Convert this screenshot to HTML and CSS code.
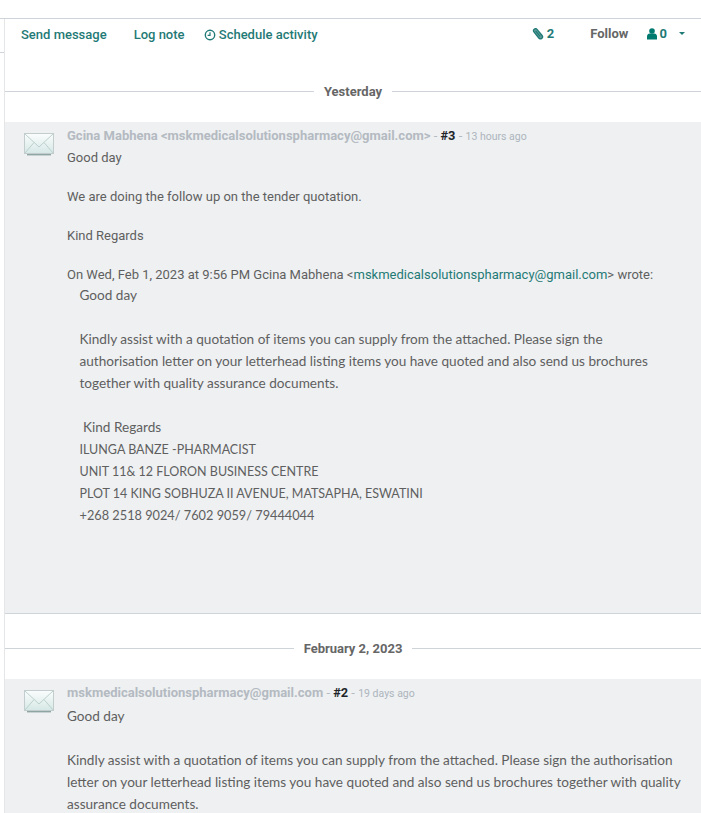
FILE: index.html
```html
<!DOCTYPE html>
<html lang="en">
<head>
<meta charset="utf-8">
<title>Chatter</title>
<link rel="stylesheet" href="styles.css">
</head>
<body>
<div class="layout">
  <div class="gutter"><div class="gutter-stub"></div></div>
  <main class="chatter">
    <div class="topbar">
      <div class="actions">
        <a class="action send">Send message</a>
        <a class="action note">Log note</a>
        <a class="action">
          <svg class="ico-clock" viewBox="0 0 12 12" width="12" height="12"><circle cx="6" cy="6" r="4.7" fill="none" stroke="#1f7a76" stroke-width="1.4"/><path d="M6 3.2V6.4H3.6" fill="none" stroke="#1f7a76" stroke-width="1.2"/></svg>
          Schedule activity
        </a>
      </div>
      <div class="tools">
        <span class="count attach">
          <svg class="ico-clip" viewBox="0 0 12 12" width="12" height="12"><path d="M1.7 3.6 6.8 10a2 2 0 0 0 3.3-2.5L5 1.4A2 2 0 0 0 1.7 3.6z" fill="#5f9c98" stroke="#1f7a76" stroke-width="1.3"/><path d="M3.6 2.8 8 8.4" stroke="#1f7a76" stroke-width="1.1"/></svg>
          2
        </span>
        <span class="follow">Follow</span>
        <span class="count people">
          <svg class="ico-user" viewBox="0 0 10 12" width="10" height="12"><circle cx="5" cy="3" r="2.8" fill="#00796f"/><path d="M0 11.6V8.2C0 6.6 1.4 5.6 2.6 5.4h4.8C8.6 5.6 10 6.6 10 8.2v3.4z" fill="#00796f"/></svg>
          0
        </span>
        <span class="caret"></span>
      </div>
    </div>

    <div class="date-sep"><span class="rule"></span><span class="date">Yesterday</span><span class="rule"></span></div>

    <article class="message first">
      <svg class="mail" viewBox="0 0 30 24" width="30" height="24">
        <defs><linearGradient id="mg" x1="0" y1="0" x2="0" y2="1"><stop offset="0" stop-color="#fbfdfd"/><stop offset="1" stop-color="#d5e8e5"/></linearGradient></defs>
        <rect x=".5" y=".5" width="29" height="20" fill="url(#mg)" stroke="#c3cdcd"/>
        <path d="M1 1 15 14 29 1M1 20 10 9.5M29 20 20 9.5" fill="none" stroke="#bcd0cd"/>
        <rect x="3" y="21" width="24" height="1.4" fill="#8fa5a3"/>
      </svg>
      <div class="content">
        <div class="meta"><span class="author">Gcina Mabhena &lt;mskmedicalsolutionspharmacy@gmail.com&gt;</span> <span class="sep">-</span> <span class="num">#3</span> <span class="sep">-</span> <span class="ago">13 hours ago</span></div>
        <p class="line">Good day</p>
        <p class="line gap">We are doing the follow up on the tender quotation.</p>
        <p class="line gap">Kind Regards</p>
        <p class="line gap">On Wed, Feb 1, 2023 at 9:56 PM Gcina Mabhena &lt;<a class="mail-link">mskmedicalsolutionspharmacy@gmail.com</a>&gt; wrote:</p>
        <div class="quote">
          <p class="cal">Good day</p>
          <p class="cal gap-cal">Kindly assist with a quotation of items you can supply from the attached. Please sign the authorisation letter on your letterhead listing items you have quoted and also send us brochures together with quality assurance documents.</p>
          <p class="cal gap-cal">&nbsp;Kind Regards</p>
          <p class="cal caps">ILUNGA BANZE -PHARMACIST</p>
          <p class="cal caps">UNIT 11&amp; 12 FLORON BUSINESS CENTRE</p>
          <p class="cal caps">PLOT 14 KING SOBHUZA II AVENUE, MATSAPHA, ESWATINI</p>
          <p class="cal digits">+268 2518 9024/ 7602 9059/ 79444044</p>
        </div>
      </div>
    </article>

    <div class="date-sep second"><span class="rule"></span><span class="date">February 2, 2023</span><span class="rule"></span></div>

    <article class="message last">
      <svg class="mail" viewBox="0 0 30 24" width="30" height="24">
        <rect x=".5" y=".5" width="29" height="20" fill="url(#mg)" stroke="#c3cdcd"/>
        <path d="M1 1 15 14 29 1M1 20 10 9.5M29 20 20 9.5" fill="none" stroke="#bcd0cd"/>
        <rect x="3" y="21" width="24" height="1.4" fill="#8fa5a3"/>
      </svg>
      <div class="content">
        <div class="meta"><span class="author">mskmedicalsolutionspharmacy@gmail.com</span> <span class="sep">-</span> <span class="num">#2</span> <span class="sep">-</span> <span class="ago">19 days ago</span></div>
        <p class="cal lead">Good day</p>
        <p class="cal gap-cal">Kindly assist with a quotation of items you can supply from the attached. Please sign the authorisation letter on your letterhead listing items you have quoted and also send us brochures together with quality assurance documents.</p>
      </div>
    </article>
  </main>
</div>
</body>
</html>
```

FILE: styles.css
```css
html, body { margin: 0; padding: 0; background: #fff; }
body {
  height: 813px;
  overflow: hidden;
  font-family: Roboto, sans-serif;
  font-size: 13px;
  line-height: 19.5px;
  color: #4c4c4c;
}
.layout {
  display: flex;
  margin-top: 18px;
  border-top: 1px solid #ced4da;
  height: 794px;
  overflow: hidden;
}
.gutter { width: 4px; flex: none; border-right: 1px solid #e4e6e8; }
.gutter-stub { height: 33px; border-bottom: 1px solid #ced4da; }
.chatter { flex: 1; min-width: 0; }

.topbar {
  display: flex;
  justify-content: space-between;
  height: 30px;
  padding: 6px 0 0 16px;
}
.actions { display: flex; gap: 27px; }
.action { color: #1f7a76; font-size: 13px; font-weight: 500; }
.note { margin-right: -8px; }
.ico-clock { vertical-align: -1.5px; }
.tools { display: flex; align-items: flex-start; padding-right: 16px; margin-top: -1px; font-weight: 700; }
.count { color: #1f7a76; font-size: 13px; }
.count svg { vertical-align: -2px; }
.ico-clip { margin: 0 -1px 0 1px; }
.ico-user { margin-right: -1px; }
.attach { margin-right: 36px; }
.follow { color: #666; font-size: 13px; margin-right: 19px; }
.caret {
  margin: 8px 0 0 12px;
  width: 0; height: 0;
  border: 3px solid transparent;
  border-top-color: #1f7a76;
  border-bottom: 0;
}

.date-sep { display: flex; align-items: center; gap: 10px; margin-top: 27px; height: 20px; }
.date-sep.second { margin-top: 25px; }
.rule { flex: 1; border-top: 1px solid #ced4da; margin-bottom: 2px; }
.date { font-weight: 700; font-size: 13px; color: #666; }

.message {
  display: flex;
  margin-top: 20px;
  padding: 4px 16px 0 19px;
  background: #eef0f2;
}
.message.first { height: 487px; border-bottom: 1px solid #ced4da; }
.message.last { height: 140px; }
.mail { flex: none; margin: 7px 13px 0 0; }
.content { flex: 1; min-width: 0; }
.meta { font-size: 13px; }
.author { font-weight: 700; color: #b4bac1; }
.sep { color: #b4bac1; }
.num { font-weight: 700; color: #212529; font-size: 12.8px; }
.ago { font-size: 10.5px; color: #adb5bd; }

.line { margin: 0; font-size: 13px; line-height: 19.5px; color: #5f5f5f; padding-top: 1px; }
.line.gap { margin-top: 18.5px; }
.mail-link { color: #1f7a76; }
.quote { padding-left: 12.5px; max-width: 590px; }
.cal { margin: 0; font-family: Lato, sans-serif; font-size: 13.6px; line-height: 22px; color: #5f5f5f; }
.caps { font-size: 12.5px; padding-top: 1px; margin-bottom: -1px; }
.digits { font-size: 12.75px; }
.gap-cal { margin-top: 22px; }
.lead { margin-top: 1px; }
```
